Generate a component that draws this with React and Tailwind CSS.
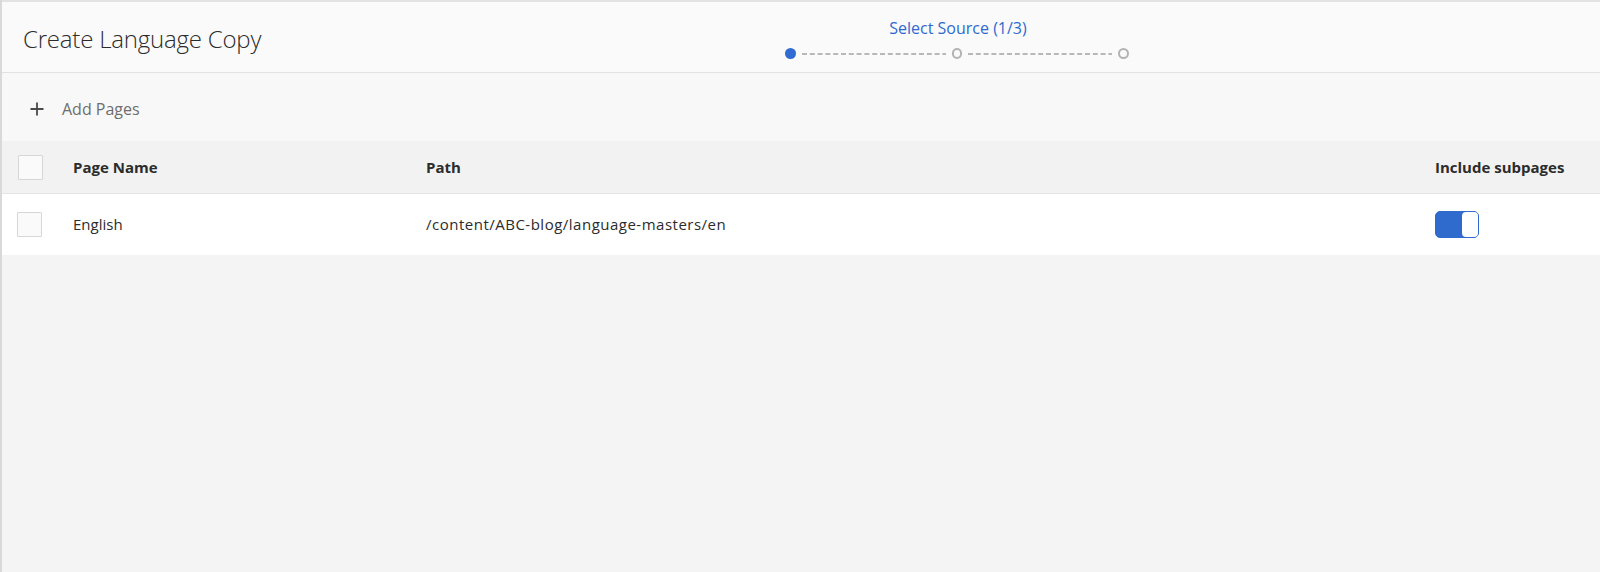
import { Plus } from "lucide-react";

const Dashes = () => (
    <svg width="146" height="4" className="mx-[6px]">
        <line x1="0" y1="2" x2="146" y2="2" stroke="#b8b8b8" strokeWidth="2" strokeDasharray="5 2.8" />
    </svg>
);

const Ring = () => (
    <div className="w-[11px] h-[11px] rounded-full border-2 border-[#b3b3b3] bg-[#fafafa]" />
);

const Checkbox = () => (
    <div className="w-[25px] h-[25px] border border-[#d6d6d6] bg-[#fafafa] rounded-[1px]" />
);

export default function App() {
    return (
        <div
            className="w-full h-[572px] bg-[#f4f4f4] border-l-2 border-[#d9d9d9] flex flex-col overflow-hidden"
            style={{ fontFamily: '"Open Sans", "Noto Sans", sans-serif' }}
        >
            <header className="h-[73px] bg-[#fafafa] border-t-2 border-b border-[#e2e2e2] flex">
                <div className="w-[783px] flex items-center pl-[21px] pt-[4px]">
                    <h1 className="text-[24px] font-light text-[#2c2c2c] tracking-[-0.2px]">Create Language Copy</h1>
                </div>
                <div className="relative w-[344px]">
                    <div className="absolute left-0 top-0 w-[344px]">
                        <div className="flex flex-col pt-[15px]">
                            <div className="text-[16px] leading-[22px] text-[#2f6ad0] text-center pl-[2px]">
                                Select Source (1/3)
                            </div>
                            <div className="flex items-center mt-[9px]">
                                <div className="w-[11px] h-[11px] rounded-full bg-[#2f6bd1]" />
                                <Dashes />
                                <Ring />
                                <Dashes />
                                <Ring />
                            </div>
                        </div>
                    </div>
                </div>
            </header>

            <div className="h-[68px] bg-[#f8f8f8] flex items-center pl-[25px] pt-[4px]">
                <Plus size={20} strokeWidth={2.2} className="text-[#4b4b4b]" />
                <span className="ml-[15px] text-[16px] text-[#6e6e6e]">Add Pages</span>
            </div>

            <div className="h-[53px] bg-[#f2f2f2] border-b border-[#e4e4e4] flex items-center text-[15px] font-bold text-[#2c2c2c]">
                <div className="w-[71px] pl-[16px]">
                    <Checkbox />
                </div>
                <div className="w-[353px]">Page Name</div>
                <div className="flex-1">Path</div>
                <div className="w-[165px]">Include subpages</div>
            </div>

            <div className="h-[61px] bg-white flex items-center text-[15px] text-[#2c2c2c]">
                <div className="w-[71px] pl-[15px]">
                    <Checkbox />
                </div>
                <div className="w-[353px]">English</div>
                <div className="flex-1 tracking-[0.5px]">/content/ABC-blog/language-masters/en</div>
                <div className="w-[165px]">
                    <div className="w-[44px] h-[27px] rounded-[5px] bg-[#2f6bcc] border border-[#2f6bcc] flex justify-end">
                        <div className="w-[16px] h-full rounded-[4px] bg-white" />
                    </div>
                </div>
            </div>
        </div>
    );
}
